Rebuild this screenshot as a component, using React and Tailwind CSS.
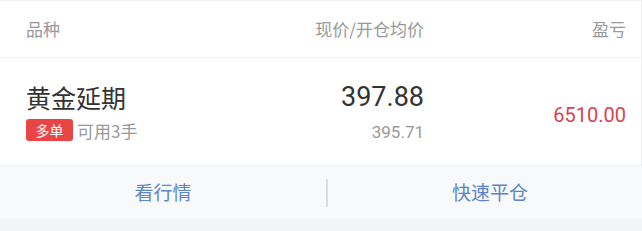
export default function App() {
  const font = { fontFamily: '"Noto Sans CJK SC", "Noto Sans", Roboto, sans-serif' };
  const num = { fontFamily: 'Roboto, "Noto Sans", sans-serif' };
  return (
    <div className="w-[642px] h-[231px] bg-[#f3f4f6] flex flex-col overflow-hidden" style={font}>
      <div className="bg-white border-t border-[#f0f0f0] border-r border-r-[#ececec] flex flex-col">
        <div className="h-[57px] flex items-center pl-[26px] pr-[15px] text-[17px] text-[#999] border-b border-[#f0f0f0]">
          <div className="flex-1">品种</div>
          <div className="w-[200px] text-right">现价/开仓均价</div>
          <div className="w-[202px] text-right">盈亏</div>
        </div>
        <div className="h-[107px] flex items-center pl-[26px] pr-[15px]">
          <div className="flex-1 flex flex-col">
            <div className="text-[25px] leading-[30px] text-[#333]">黄金延期</div>
            <div className="mt-[7px] flex items-center">
              <span className="h-[22px] w-[47px] flex items-center justify-center rounded-[3px] bg-[#ea4545] text-white text-[14px] leading-none">多单</span>
              <span className="ml-[4px] text-[17px] text-[#999] leading-none">可用3手</span>
            </div>
          </div>
          <div className="w-[200px] flex flex-col items-end">
            <div className="text-[27px] leading-[30px] text-[#333]" style={num}>397.88</div>
            <div className="mt-[10px] text-[17px] leading-[20px] text-[#999]" style={num}>395.71</div>
          </div>
          <div className="w-[202px] text-right text-[20px] text-[#d9434b] pt-[6px]" style={num}>6510.00</div>
        </div>
      </div>
      <div className="h-[54px] bg-[#f8f9fb] border-t border-[#eef0f3] flex items-center text-[19px] text-[#5b85c6]">
        <div className="w-[326px] text-center">看行情</div>
        <div className="w-[2px] h-[28px] bg-[#dcdcdc]"></div>
        <div className="flex-1 text-center pl-[10px]">快速平仓</div>
      </div>
    </div>
  );
}
